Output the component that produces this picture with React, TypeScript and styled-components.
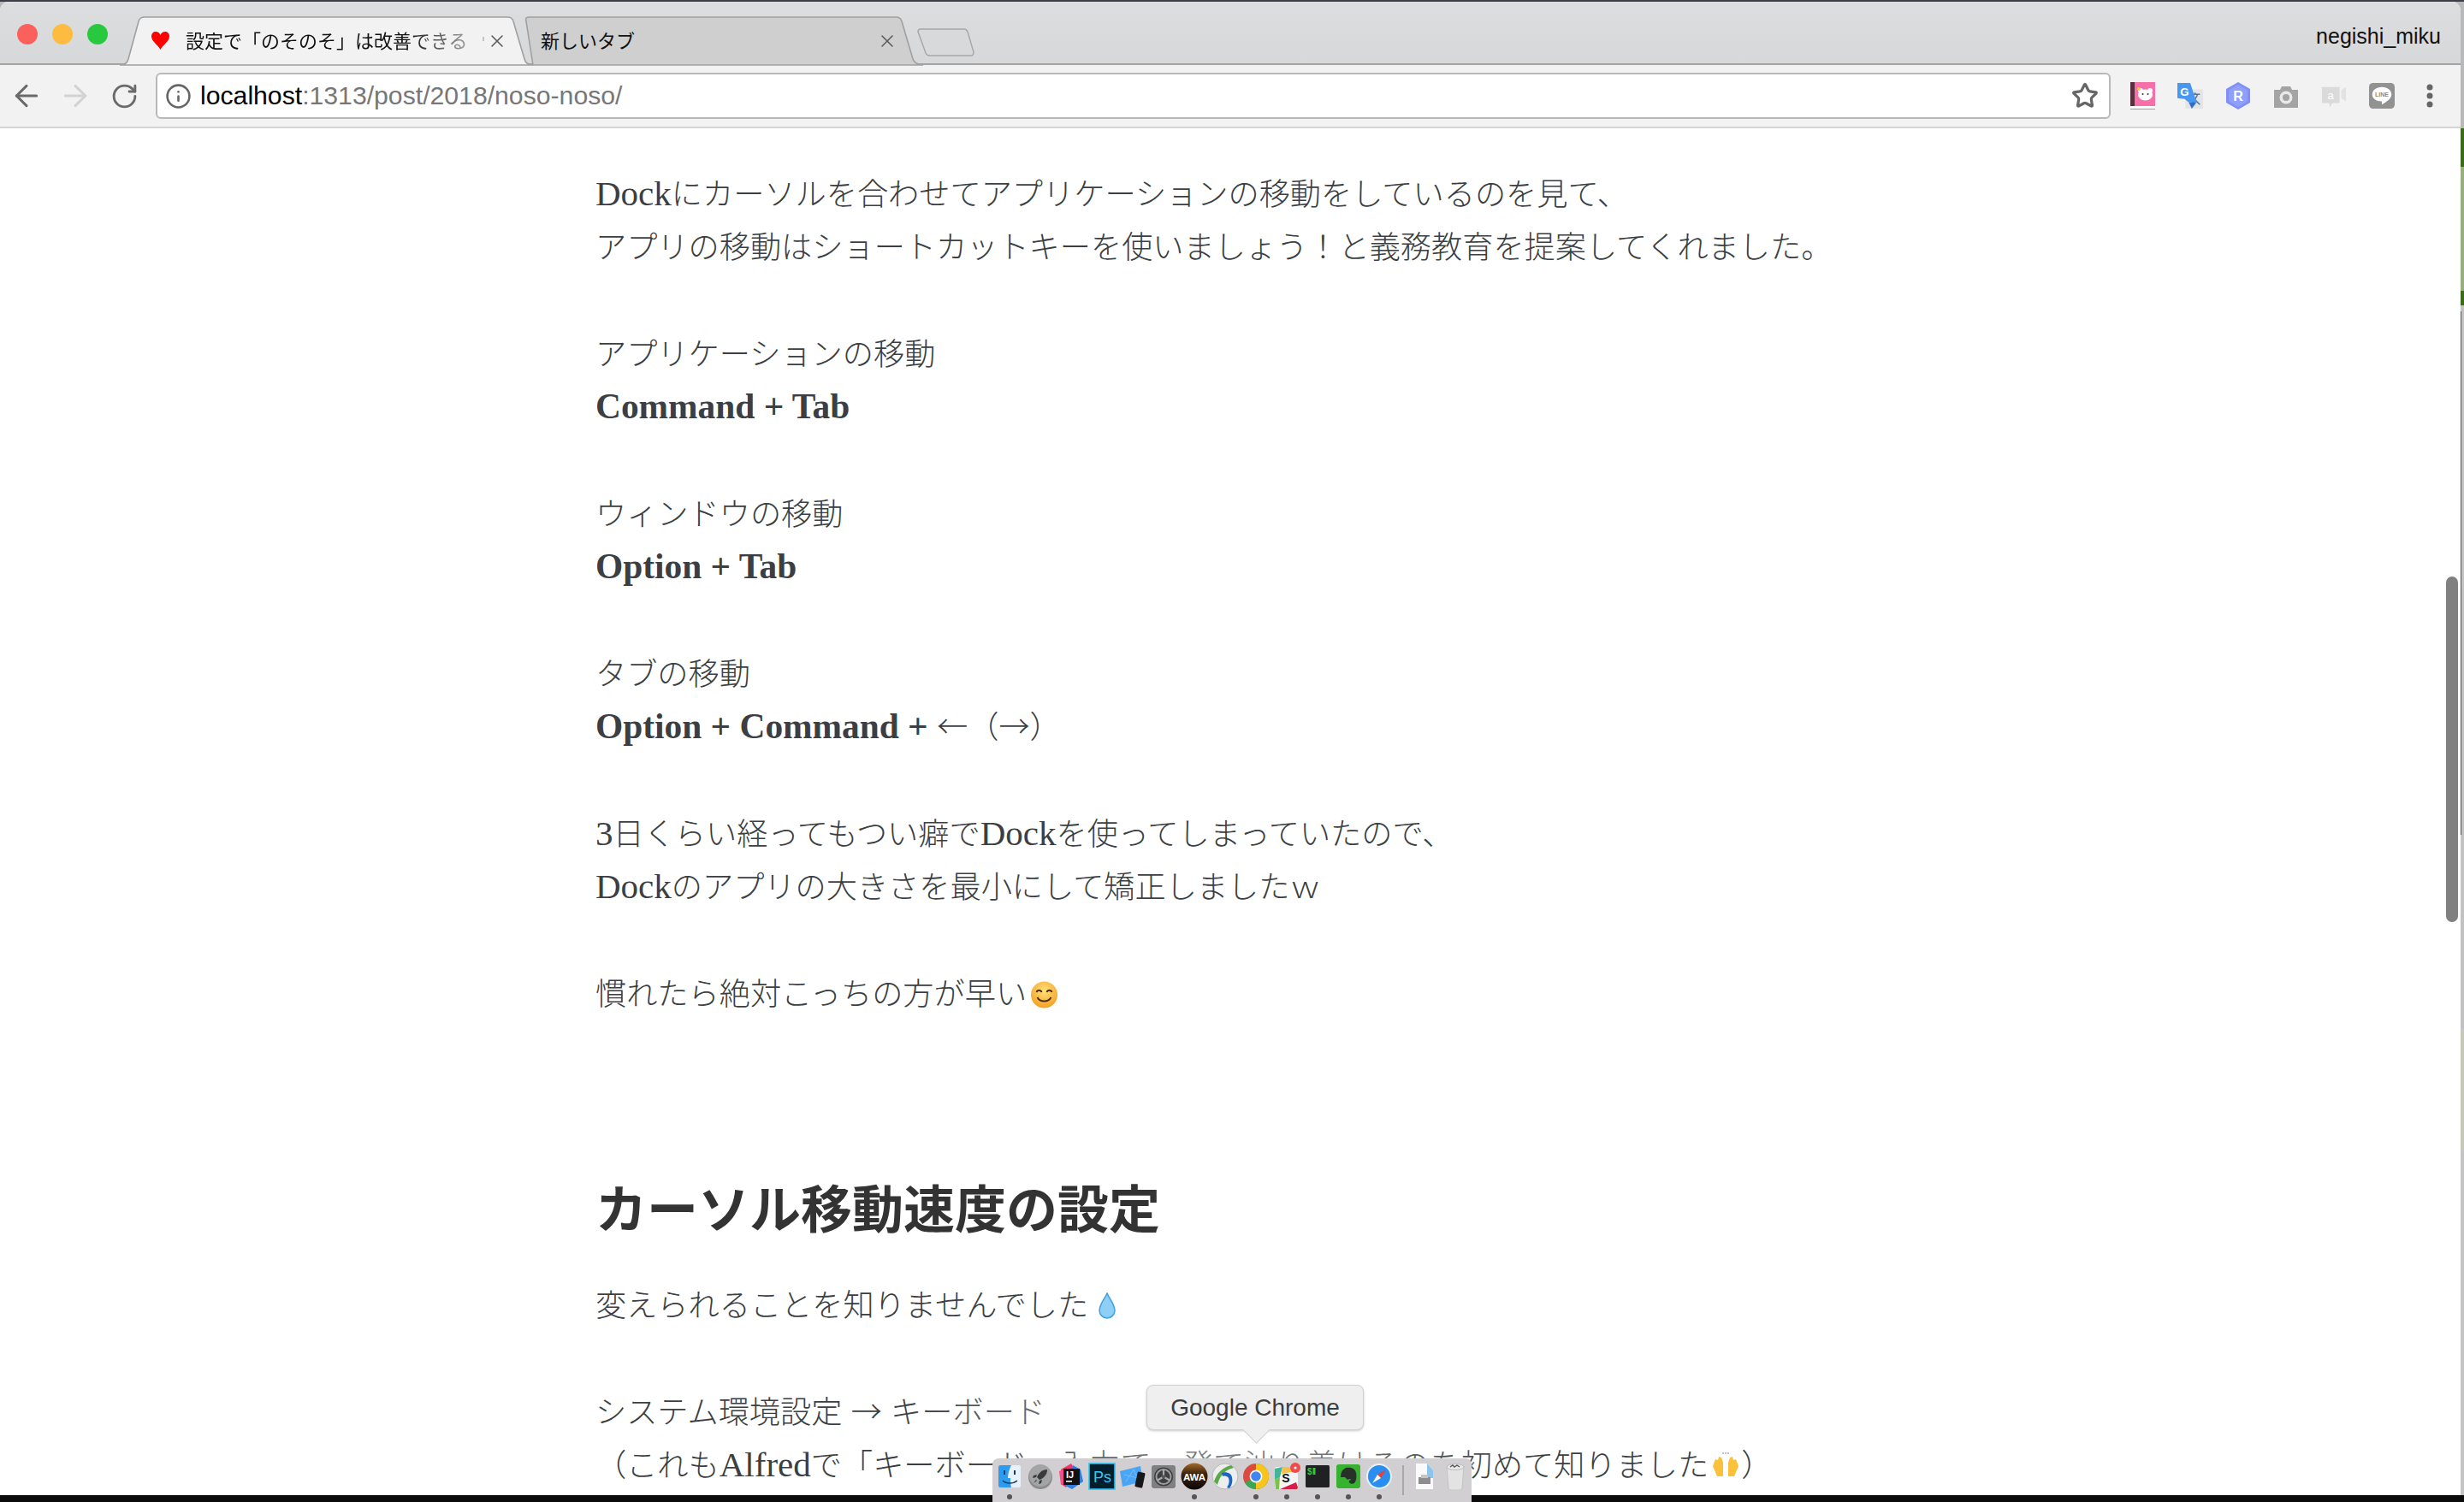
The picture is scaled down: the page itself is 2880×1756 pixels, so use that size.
import React from "react";
import styled, { createGlobalStyle } from "styled-components";
import { ArrowLeft, ArrowRight, RotateCw, Info, Star, X } from "lucide-react";

const Global = createGlobalStyle`
  html, body { margin: 0; padding: 0; background: #0b0b0b; overflow: hidden; }
  * { box-sizing: border-box; }
`;

const Screen = styled.div`
  position: relative; width: 2880px; height: 1756px; overflow: hidden;
  padding-top: 2px;
  background:
    linear-gradient(#555, #555) 2876px 364px / 1px 612px no-repeat,
    linear-gradient(180deg,
      #3a3f4a 0 2px, #b9b9b9 2px 150px,
      #3d6b1c 150px 195px, #98ad80 195px 340px, #3d6b1c 340px 357px,
      #c2c2c2 357px 1203px, #c5c9ba 1203px 1346px, #c4c4c4 1346px 1748px,
      #0b0b0b 1748px);
`;
const Win = styled.div`
  display: flex; flex-direction: column; width: 2876px; height: 1746px;
  background: #fff; border-radius: 10px 10px 0 0; overflow: hidden;
`;
const TabBar = styled.div`
  display: flex; align-items: flex-end; flex: none; height: 74px; padding-left: 20px;
  background: linear-gradient(180deg, #dcddde, #d7d8d9); border-bottom: 2px solid #a3a3a3;
`;
const Lights = styled.div`align-self: flex-start; display: flex; gap: 17px; margin: 26px 14px 0 0;`;
const Light = styled.span<{ $c: string }>`width: 24px; height: 24px; border-radius: 50%; background: ${p => p.$c};`;
const Tab = styled.div<{ $active?: boolean }>`
  position: relative; flex: none; display: flex; align-items: center; height: 57px; margin-bottom: -2px;
  width: ${p => (p.$active ? 483 : 456)}px; padding: ${p => (p.$active ? "0 30px 0 36px" : "0 30px 0 9px")};
  z-index: ${p => (p.$active ? 2 : 1)};
  font: 22px/1 "Noto Sans CJK JP", sans-serif; color: #111;
`;
const TabBg = styled.svg`position: absolute; left: 0; top: 0; width: 100%; height: 100%; overflow: visible;`;
const Heart = styled.svg`position: relative; flex: none; width: 23px; height: 21px; margin-right: 18px;`;
const TabLabel = styled.span<{ $fade?: boolean }>`
  position: relative; flex: 1; white-space: nowrap; line-height: 30px; padding-bottom: 4px;
  ${p => (p.$fade ? "-webkit-mask-image: linear-gradient(90deg, #000 74%, rgba(0,0,0,.3) 97%); mask-image: linear-gradient(90deg, #000 74%, rgba(0,0,0,.3) 97%);" : "")}
`;
const FadeDot = styled.span`position: relative; flex: none; width: 2px; height: 5px; margin: 0 3px 4px 0; background: #c4c4c4;`;
const TabClose = styled(X)`position: relative; flex: none; color: #555;`;
const NewTab = styled.svg`flex: none; width: 67px; height: 33px; margin: 0 0 8px -7px;`;
const Profile = styled.div`
  align-self: flex-start; margin: 26px 23px 0 auto;
  font: 25px/28px "Liberation Sans", sans-serif; color: #111;
`;
const Toolbar = styled.div`
  display: flex; align-items: center; flex: none; height: 74px; padding: 0 0 0 16px;
  background: #f2f2f3; border-bottom: 2px solid #d4d4d4; gap: 27px;
`;
const NavIcon = styled.span<{ $off?: boolean }>`
  display: flex; justify-content: center; width: 30px; color: ${p => (p.$off ? "#d2d2d2" : "#6a6a6a")};
  svg { flex: none; }
`;
const Omni = styled.div`
  display: flex; align-items: center; flex: none; width: 2285px; height: 54px; margin-left: -5px; padding: 0 12px;
  background: #fff; border: 2px solid #b8b8b8; border-radius: 6px;
  font: 30.2px/1 "Liberation Sans", sans-serif; color: #777;
`;
const OmniInfo = styled(Info)`flex: none; color: #666; margin: 0 10px 0 -3px;`;
const Host = styled.span`color: #000;`;
const OmniStar = styled(Star)`flex: none; margin-left: auto; color: #666;`;
const Exts = styled.div`display: flex; align-items: center; gap: 26px; margin-left: -5px;`;
const Ext = styled.svg`display: block; flex: none; width: 30px; height: 32px;`;

const Page = styled.main`flex: 1; position: relative; overflow: hidden; padding: 43px 0 0 696px;`;
const Para = styled.p`
  margin: 0 0 62.33px; white-space: nowrap; color: #3b3f43;
  font: 300 36.2px/62.33px "Noto Sans CJK JP", sans-serif;
`;
const Latin = styled.span`font-family: "Liberation Serif", serif; font-size: 41px; line-height: 1;`;
const Bold = styled.strong`font-family: "Liberation Serif", serif; font-size: 41.4px; font-weight: 700; line-height: 1;`;
const Head = styled.h2`
  margin: 182px 0 44px; white-space: nowrap; color: #333;
  font: 700 60px/76px "Noto Sans CJK JP", sans-serif;
`;
const Emoji = styled.svg<{ $w: number; $gap: number }>`display: inline-block; width: ${p => p.$w}px; height: 32px; margin-left: ${p => p.$gap}px; vertical-align: -4px;`;
const Thumb = styled.div`position: absolute; top: 524px; right: 3px; width: 14px; height: 404px; border-radius: 7px; background: #808080;`;

const Haze = styled.div`
  position: absolute; left: 1040px; top: 1560px; width: 800px; height: 196px; pointer-events: none;
  background: radial-gradient(closest-side, rgba(255,255,255,.55), rgba(255,255,255,0));
`;
const Tooltip = styled.div`
  position: absolute; left: 1340px; top: 1619px; width: 254px; height: 53px; display: flex; align-items: center; justify-content: center;
  background: #efefef; border: 1px solid #d2d2d2; border-radius: 8px; box-shadow: 0 1px 3px rgba(0,0,0,.22);
  font: 28px/1 "Liberation Sans", sans-serif; color: #3c3c3c;
  &::after {
    content: ""; position: absolute; left: 116px; bottom: -12px; width: 22px; height: 22px; transform: rotate(45deg);
    background: #efefef; border-right: 1px solid #d2d2d2; border-bottom: 1px solid #d2d2d2;
  }
`;
const Dock = styled.div`
  position: absolute; left: 1160px; top: 1705px; width: 560px; height: 51px; display: flex; align-items: flex-start;
  padding: 5px 0 0 2px; background: #d1cfd1; border-radius: 7px 7px 0 0;
`;
const DockCell = styled.div`display: flex; flex-direction: column; align-items: center; width: 36px; flex: none;`;
const DockIcon = styled.svg`display: block; width: 32px; height: 32px;`;
const DockDot = styled.span<{ $on?: boolean }>`width: 6px; height: 6px; margin-top: 5px; border-radius: 50%; background: ${p => (p.$on ? "#555" : "transparent")};`;
const DockSep = styled.div`flex: none; width: 2px; height: 35px; margin: 3px 6px 0 9px; background: #a9a7a9;`;

const sans = "Liberation Sans, sans-serif";
const dockItems: { on?: boolean; art: React.ReactNode }[] = [
  { on: true, art: <>
    <rect x="3" y="3" width="26" height="26" rx="2" fill="#e8f1fa"/>
    <path d="M3 5a2 2 0 0 1 2-2h13c-3 6-4 11-4 15h3c0 4 0 7 1 11H5a2 2 0 0 1-2-2z" fill="#2c9cf0"/>
    <path d="M8 21c4 4 12 4 17 0" fill="none" stroke="#123a66" strokeWidth="1.5"/>
    <rect x="9" y="9" width="2" height="5" fill="#123a66"/><rect x="21" y="9" width="2" height="5" fill="#123a66"/>
  </> },
  { art: <>
    <circle cx="16" cy="17" r="14" fill="#8a8b8d"/><circle cx="16" cy="15" r="13" fill="#a3a4a6"/>
    <path d="M24 8c-6 0-10 4-12 9l3 3c5-2 9-6 9-12z" fill="#3a3a3c"/><path d="M12 14l-4 1-1 3 4-1zM18 20l-1 4-3 1 1-4zM11 20l-3 4 4-3z" fill="#3a3a3c"/>
  </> },
  { art: <>
    <path d="M4 8l12-7 3 5-9 23-6-4z" fill="#f0386f"/><path d="M18 3l9 5 3 14-13 9-8-4z" fill="#2d7fe0"/><path d="M2 10l8-3v16l-6 3z" fill="#fb4c8c"/>
    <rect x="7" y="7" width="19" height="19" fill="#111"/>
    <text x="10" y="18" fontFamily={sans} fontWeight="700" fontSize="11" fill="#fff">IJ</text>
    <rect x="10" y="21" width="7" height="1.6" fill="#fff"/>
  </> },
  { art: <>
    <rect x="1" y="1" width="30" height="30" fill="#031e2c" stroke="#27c5f0" strokeWidth="1.6"/>
    <text x="6" y="23" fontFamily={sans} fontSize="18" fill="#30c8f5">Ps</text>
  </> },
  { art: <>
    <path d="M1 10l24-6 3 18-24 6z" fill="#4aa5f5"/><path d="M8 22l9-14 5 12M6 14l16 4" stroke="#7cc2fb" strokeWidth=".8" fill="none"/>
    <rect x="20" y="11" width="9" height="18" rx="1.5" fill="#171719" transform="rotate(12 24 20)"/>
  </> },
  { art: <>
    <rect x="2" y="3" width="28" height="27" rx="3" fill="#7f8083"/><circle cx="16" cy="16.5" r="11" fill="#3e3f41"/><circle cx="16" cy="16.5" r="8.5" fill="none" stroke="#9c9c9e" strokeWidth="2"/>
    <path d="M16 8v8.5l7 4M16 16.5l-7 4" stroke="#a8a8aa" strokeWidth="2.2" fill="none"/><circle cx="16" cy="16.5" r="2" fill="#555"/>
  </> },
  { on: true, art: <>
    <defs><linearGradient id="awa" x1="0" y1="0" x2="0" y2="1"><stop offset="0" stopColor="#a86a24"/><stop offset=".4" stopColor="#3a2412"/><stop offset="1" stopColor="#0c0806"/></linearGradient></defs>
    <circle cx="16" cy="16" r="15.5" fill="url(#awa)"/>
    <text x="16" y="20.5" textAnchor="middle" fontFamily={sans} fontWeight="700" fontSize="11.5" fill="#fff">AWA</text>
  </> },
  { art: <>
    <circle cx="16" cy="16" r="15" fill="#eceded" stroke="#b8b8b8"/>
    <path d="M3 22C6 12 14 5 23 3l3 3C17 8 10 14 7 26z" fill="#5aa84a"/>
    <path d="M12 12c5-2 11 0 12 5s0 9-3 13l-3-1c3-4 3-8 2-11-1-2-4-3-7-2z" fill="#1e63c0"/>
  </> },
  { on: true, art: <>
    <circle cx="16" cy="16" r="15" fill="#dd4b3e"/>
    <path d="M16 1a15 15 0 0 1 13 22.500L16 16z" fill="#f8c51c"/>
    <path d="M3 23.500A15 15 0 0 0 29 23.500L16 16z" fill="#3aa757"/><path d="M16 31a15 15 0 0 0 13-7.500L21 16H16z" fill="#f8c51c"/>
    <circle cx="16" cy="16" r="7.400" fill="#fff"/><circle cx="16" cy="16" r="5.800" fill="#3f86f0"/>
  </> },
  { on: true, art: <>
    <rect x="2" y="5" width="27" height="26" rx="2" fill="#f4f4f4"/>
    <path d="M2 7l9-2-3 12-6 3z" fill="#41b59a"/><path d="M11 5l14 0-3 6-12 2z" fill="#f0c24a"/><path d="M8 31l19-8 2 6-1 2z" fill="#d81d4a"/><path d="M2 20l6-3-1 14H3z" fill="#7dc04a"/>
    <text x="15" y="23" textAnchor="middle" fontFamily={sans} fontWeight="700" fontSize="14" fill="#111">S</text>
    <circle cx="26" cy="6" r="6" fill="#f04a4a"/><circle cx="26" cy="6" r="1.6" fill="#fff"/>
  </> },
  { on: true, art: <>
    <rect x="2" y="3" width="28" height="26" rx="1.5" fill="#202122"/>
    <text x="4" y="14" fontFamily={sans} fontWeight="700" fontSize="10" fill="#37c63c">$</text><rect x="10.5" y="6" width="3" height="8" fill="#37c63c"/>
  </> },
  { on: true, art: <>
    <rect x="2" y="2" width="28" height="28" rx="3" fill="#36b22f"/>
    <path d="M9 9l4-3c5-1 11 0 12 6 1 5 0 10-2 12-2 1-5 1-6-1-1-2 1-3 3-3l-3-1-2 1-3-3H7c0-4 1-6 2-8z" fill="#263228"/>
  </> },
  { on: true, art: <>
    <circle cx="16" cy="16" r="15" fill="#e9f1f8"/><circle cx="16" cy="16" r="13" fill="#2a8df0"/>
    <path d="M24 8l-10 6 4 4z" fill="#ef3d30"/><path d="M8 24l10-6-4-4z" fill="#f7f7f7"/>
  </> },
];
const docItems: React.ReactNode[] = [
  <><path d="M6 1h13l7 8v22H6z" fill="#fafafa"/><path d="M19 1l7 8v9h-7z" fill="#8cc4ee"/><rect x="9" y="17" width="14" height="8" fill="#8d8d8d"/><rect x="12" y="14" width="8" height="4" fill="#c5c5c5"/></>,
  <><path d="M6 4h20l-2 26a3 3 0 0 1-3 2H11a3 3 0 0 1-3-2z" fill="#e3e3e4" stroke="#c3c3c4"/><ellipse cx="16" cy="5" rx="10" ry="3.5" fill="#e8e8e9" stroke="#bcbcbd"/><path d="M10 5l3-2 2 2 3-2 3 2" stroke="#555" strokeWidth="1.4" fill="none"/></>,
];

export default function App() {
  return (
    <>
      <Global />
      <Screen>
        <Win>
          <TabBar>
            <Lights>
              <Light $c="#fc605c" />
              <Light $c="#fdbc40" />
              <Light $c="#29c93f" />
            </Lights>
            <Tab $active>
              <TabBg viewBox="0 0 483 57" preserveAspectRatio="none">
                <path d="M0 57C6 57 9 54 10 50L22 6C23 2 25 1 29 1L453 1C457 1 459 2 460 6L473 50C474 54 477 57 483 57Z" fill="#f2f2f3" stroke="#a0a0a0" strokeWidth="1.6" />
              </TabBg>
              <Heart viewBox="0 0 23 21"><path d="M11.5 21C8 15 1 11 1 5.5 1 2 3.400 0 6 0c2.500 0 4.500 1.500 5.500 4C12.500 1.500 14.500 0 17 0c2.600 0 5 2 5 5.500C22 11 15 15 11.500 21Z" fill="#f00" /></Heart>
              <TabLabel $fade>設定で「のそのそ」は改善できる</TabLabel>
              <FadeDot />
              <TabClose size={24} strokeWidth={1.5} />
            </Tab>
            <Tab>
              <TabBg viewBox="0 0 456 57" preserveAspectRatio="none">
                <path d="M0 57L-8 6C-9 2-8 1-4 1L424 1C428 1 430 2 431 6L444 50C445 54 450 57 456 57Z" fill="#cfcfcf" stroke="#a0a0a0" strokeWidth="1.6" />
              </TabBg>
              <TabLabel>新しいタブ</TabLabel>
              <TabClose size={24} strokeWidth={1.5} />
            </Tab>
            <NewTab viewBox="0 0 67 33">
              <path d="M4 1H55C57 1 58 2 59 4L66 28C66 31 65 32 63 32H14C12 32 11 31 10 29L1 4C1 2 2 1 4 1Z" fill="#d8d9da" stroke="#a8a8a8" strokeWidth="1.5" />
            </NewTab>
            <Profile>negishi_miku</Profile>
          </TabBar>
          <Toolbar>
            <NavIcon><ArrowLeft size={40} strokeWidth={1.8} /></NavIcon>
            <NavIcon $off><ArrowRight size={40} strokeWidth={1.8} /></NavIcon>
            <NavIcon><RotateCw size={33} strokeWidth={2.1} /></NavIcon>
            <Omni>
              <OmniInfo size={31} strokeWidth={2} />
              <Host>localhost</Host>:1313/post/2018/noso-noso/
              <OmniStar size={32} strokeWidth={2.4} />
            </Omni>
            <Exts>
              <Ext viewBox="0 0 30 32">
                <rect x="1" y="0" width="29" height="32" fill="#f56fa9" /><rect x="1" y="0" width="5" height="28" fill="#5a3040" />
                <rect x="1" y="28" width="29" height="3" fill="#fff" />
                <circle cx="13" cy="10" r="3" fill="#fff" /><circle cx="24" cy="10" r="3" fill="#fff" />
                <ellipse cx="18.500" cy="15" rx="8.500" ry="6.500" fill="#fff" /><circle cx="11" cy="8" r="2" fill="#f3c84a" />
                <circle cx="15.500" cy="14" r="1" fill="#333" /><circle cx="21.500" cy="14" r="1" fill="#333" />
              </Ext>
              <Ext viewBox="0 0 32 32">
                <rect x="10" y="8" width="22" height="24" fill="#e3e4e5" />
                <path d="M16 14h12M22 12v3M18 27l7-12M19 18l9 9" stroke="#5a6f8f" strokeWidth="1.6" fill="none" />
                <path d="M0 0h16l8 24H14l-5-4-9-1z" fill="#4a97f2" /><path d="M14 24h10l-6 8z" fill="#2f6fc4" />
                <text x="3.500" y="16" fontFamily={sans} fontWeight="700" fontSize="14" fill="#fff">G</text>
              </Ext>
              <Ext viewBox="0 0 30 32">
                <path d="M15 0l14 8v16l-14 8-14-8V8z" fill="#7f8ff7" /><path d="M15 3l11 6.500v13L15 29 4 22.500v-13z" fill="#8ea0fa" />
                <text x="15" y="22" textAnchor="middle" fontFamily={sans} fontWeight="700" fontSize="16" fill="#fff">R</text>
              </Ext>
              <Ext viewBox="0 0 30 32">
                <path d="M1 9h7l2-4h10l2 4h7v21H1z" fill="#a4a4a4" /><circle cx="15" cy="18" r="7.500" fill="#e9e9e9" /><circle cx="15" cy="18" r="4" fill="#a4a4a4" />
              </Ext>
              <Ext viewBox="0 0 32 32">
                <path d="M1 5h22v20H14l-3 5-1-5H1z" fill="#dadada" /><path d="M25 9l6-4v18l-6-4z" fill="#e2e2e2" />
                <text x="12" y="20" textAnchor="middle" fontFamily={sans} fontSize="14" fill="#fff">a</text>
              </Ext>
              <Ext viewBox="0 0 32 32">
                <rect width="32" height="32" rx="5" fill="#929292" />
                <path d="M16 5c7 0 12 4 12 9.500 0 5-6 9-12 12.500v-4c-7 0-12-3.500-12-8.500C4 9 9 5 16 5z" fill="#fff" />
                <text x="16" y="17.500" textAnchor="middle" fontFamily={sans} fontWeight="700" fontSize="7.500" fill="#8a8a8a">LINE</text>
              </Ext>
              <Ext viewBox="0 0 30 32">
                <circle cx="15" cy="6" r="3.500" fill="#666" /><circle cx="15" cy="16" r="3.500" fill="#666" /><circle cx="15" cy="26" r="3.500" fill="#666" />
              </Ext>
            </Exts>
          </Toolbar>
          <Page>
            <Para>
              <Latin>Dock</Latin>にカーソルを合わせてアプリケーションの移動をしているのを見て、<br />
              アプリの移動はショートカットキーを使いましょう！と義務教育を提案してくれました。
            </Para>
            <Para>アプリケーションの移動<br /><Bold>Command + Tab</Bold></Para>
            <Para>ウィンドウの移動<br /><Bold>Option + Tab</Bold></Para>
            <Para>タブの移動<br /><Bold>Option + Command + </Bold>←（→）</Para>
            <Para>
              <Latin>3</Latin>日くらい経ってもつい癖で<Latin>Dock</Latin>を使ってしまっていたので、<br />
              <Latin>Dock</Latin>のアプリの大きさを最小にして矯正しましたｗ
            </Para>
            <Para>
              慣れたら絶対こっちの方が早い
              <Emoji $w={33} $gap={4} viewBox="0 0 32 32">
                <defs><radialGradient id="smile" cx=".5" cy=".35" r=".7"><stop offset="0" stopColor="#ffe27a" /><stop offset="1" stopColor="#f59a1e" /></radialGradient></defs>
                <circle cx="16" cy="16" r="15.500" fill="url(#smile)" />
                <path d="M7 13c1-3 5-3 6 0M19 13c1-3 5-3 6 0" stroke="#4a3010" strokeWidth="1.800" fill="none" />
                <path d="M8 19c3 6 13 6 16 0" stroke="#4a3010" strokeWidth="1.800" fill="none" />
              </Emoji>
            </Para>
            <Head>カーソル移動速度の設定</Head>
            <Para>
              変えられることを知りませんでした
              <Emoji $w={22} $gap={11} viewBox="0 0 22 32">
                <path d="M11 1c3 7 9 13 9 20a9 9 0 0 1-18 0C2 14 8 8 11 1z" fill="#8ecff5" stroke="#3f9fe0" strokeWidth="1.500" />
              </Emoji>
            </Para>
            <Para>
              システム環境設定<Latin> </Latin>→<Latin> </Latin>キーボード<br />
              （これも<Latin>Alfred</Latin>で「キーボード」入力で一発で辿り着けるのを初めて知りました
              <Emoji $w={36} $gap={2} viewBox="0 0 36 32">
                <path d="M3 16l3-8 3 1 1-4 3 1 2 6v16H8z" fill="#fbc13a" /><path d="M33 16l-3-8-3 1-1-4-3 1-2 6v16h7z" fill="#fbc13a" />
                <path d="M14 1l2 0M18 0v2M22 1l-2 0" stroke="#aaa" strokeWidth="1.500" />
              </Emoji>
              ）
            </Para>
            <Thumb />
          </Page>
        </Win>
        <Haze />
        <Tooltip>Google Chrome</Tooltip>
        <Dock>
          {dockItems.map((d, i) => (
            <DockCell key={i}>
              <DockIcon viewBox="0 0 32 32">{d.art}</DockIcon>
              <DockDot $on={d.on} />
            </DockCell>
          ))}
          <DockSep />
          {docItems.map((art, i) => (
            <DockCell key={i}>
              <DockIcon viewBox="0 0 32 32">{art}</DockIcon>
              <DockDot />
            </DockCell>
          ))}
        </Dock>
      </Screen>
    </>
  );
}
